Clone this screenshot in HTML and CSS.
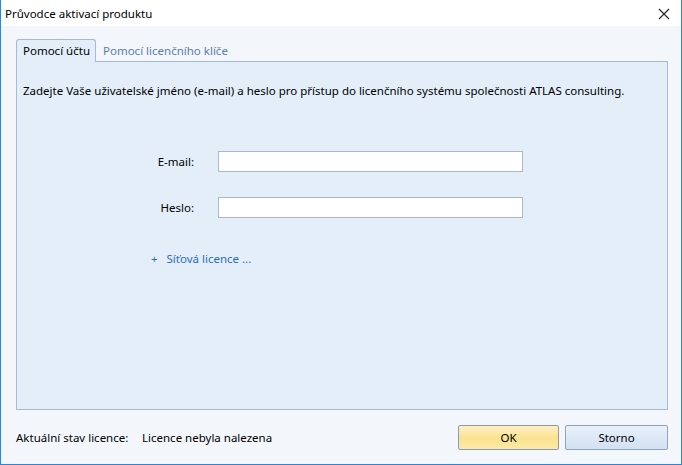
FILE: index.html
```html
<!DOCTYPE html>
<html>
<head>
    <title>Průvodce aktivací produktu</title>
    <link rel="stylesheet" href="styles.css">
</head>
<body>
    <div id="window">
        <div class="titlebar">
            <span class="title">Průvodce aktivací produktu</span>
            <span class="close">
                <svg width="12" height="12" viewBox="0 0 12 12"><path d="M1 1 L11 11 M11 1 L1 11" stroke="#222" stroke-width="1.1" fill="none"/></svg>
            </span>
        </div>
        <div class="content">
            <div class="tabs">
                <div class="tab active">Pomocí účtu</div>
                <div class="tab">Pomocí licenčního klíče</div>
            </div>
            <div class="panel">
                <p class="intro">Zadejte Vaše uživatelské jméno (e-mail) a heslo pro přístup do licenčního systému společnosti ATLAS consulting.</p>
                <div class="form">
                    <div class="row">
                        <label>E-mail:</label>
                        <input type="text" class="field">
                    </div>
                    <div class="row">
                        <label>Heslo:</label>
                        <input type="password" class="field">
                    </div>
                </div>
                <a class="network">+&nbsp;&nbsp;&nbsp;Síťová licence ...</a>
            </div>
            <div class="footer">
                <span class="status-label">Aktuální stav licence:</span>
                <span class="status">Licence nebyla nalezena</span>
                <button class="btn ok">OK</button>
                <button class="btn storno">Storno</button>
            </div>
        </div>
    </div>
</body>
</html>
```

FILE: styles.css
```css
html, body {
    margin: 0;
    padding: 0;
}
body {
    width: 682px;
    height: 465px;
    font-family: "Noto Sans", sans-serif;
    font-size: 11.5px;
    color: #000;
}
#window {
    box-sizing: border-box;
    width: 682px;
    height: 465px;
    border: 1px solid #2b86d6;
    border-top: none;
    background: #f3f7fc;
    display: flex;
    flex-direction: column;
}
.titlebar {
    height: 27px;
    background: #fff;
    display: flex;
    align-items: center;
    justify-content: space-between;
    padding: 0 0 0 4px;
}
.close {
    width: 34px;
    display: flex;
    justify-content: center;
    padding-top: 2px;
}
.content {
    flex: 1;
    padding: 13px 13px 0 15px;
    display: flex;
    flex-direction: column;
}
.tabs {
    display: flex;
    height: 22px;
    align-items: flex-end;
}
.tab {
    padding: 0 7px;
    height: 20px;
    line-height: 19px;
    color: #5d7ea6;
}
.tab.active {
    height: 22px;
    line-height: 22px;
    color: #000;
    background: #e3eef9;
    border: 1px solid #a7bad3;
    border-bottom: none;
    border-radius: 3px 3px 0 0;
    position: relative;
    top: 1px;
    padding: 0 5px 0 6px;
}
.panel {
    height: 349px;
    box-sizing: border-box;
    background: #e3eef9;
    border: 1px solid #a7bad3;
    padding: 19px 6px 0 6px;
}
.intro {
    margin: 0;
    line-height: 20px;
}
.form {
    margin-top: 50px;
    display: flex;
    flex-direction: column;
    gap: 25px;
}
.row {
    display: flex;
    align-items: center;
}
.row label {
    width: 171px;
    text-align: right;
    margin-right: 24px;
}
.field {
    box-sizing: border-box;
    width: 305px;
    height: 21px;
    border: 1px solid #a9b8cf;
    background: #fff;
    margin: 0;
    padding: 0 3px;
}
.network {
    display: block;
    margin: 33px 0 0 128px;
    color: #2e6eb4;
}
.footer {
    display: flex;
    align-items: center;
    height: 53px;
    padding-top: 1px;
}
.status-label {
    width: 126px;
}
.status {
    flex: 1;
}
.btn {
    box-sizing: border-box;
    width: 101px;
    height: 25px;
    margin-left: 6px;
    font-family: "Noto Sans", sans-serif;
    font-size: 11.5px;
    color: #000;
    border: 1px solid #8ea3c3;
    border-radius: 2px;
    background: linear-gradient(#e9f1fb, #d2e0f1);
}
.btn.storno {
    width: 103px;
}
.btn.ok {
    background: linear-gradient(#fdf0c2, #fbe28f 55%, #fbe9a8);
    border-color: #8d98b2;
}
```
